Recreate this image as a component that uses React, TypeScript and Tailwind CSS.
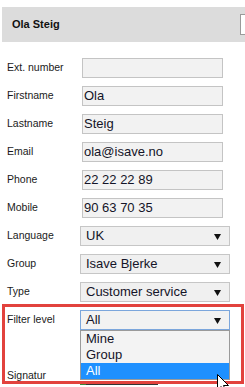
import React from "react"

const fields = [
  { label: "Ext. number", value: "" },
  { label: "Firstname", value: "Ola" },
  { label: "Lastname", value: "Steig" },
  { label: "Email", value: "ola@isave.no" },
  { label: "Phone", value: "22 22 22 89" },
  { label: "Mobile", value: "90 63 70 35" },
]

const selects = [
  { label: "Language", value: "UK" },
  { label: "Group", value: "Isave Bjerke" },
  { label: "Type", value: "Customer service" },
]

function Arrow() {
  return (
    <svg width="7" height="6" viewBox="0 0 7 6" className="absolute right-[8px] top-[7px]">
      <path d="M0 0 H7 L3.5 6 Z" fill="#111" />
    </svg>
  )
}

function SelectBox({ value, focused }: { value: string; focused?: boolean }) {
  return (
    <div
      className={
        focused
          ? "relative ml-0 h-[20px] w-[150px] border border-[#7ba6dc] bg-[#f2f2f2] pl-[5px] text-[13px] leading-[18px] text-[#141428]"
          : "relative ml-0 h-[20px] w-[150px] border border-[#c6c6c6] bg-[#f0f0f0] pl-[5px] text-[13px] leading-[18px] text-[#141428]"
      }
    >
      {value}
      <Arrow />
    </div>
  )
}

export default function App() {
  return (
    <div className="relative h-[387px] w-[245px] overflow-hidden bg-white font-['Liberation_Sans',Arial,sans-serif] text-[#1a1a1a]">
      {/* header */}
      <div className="ml-[2px] mt-[7px] flex h-[35px] items-center justify-between bg-[#dcdcdc] pl-[10px]">
        <span className="text-[11px] font-bold text-[#111]">Ola Steig</span>
        <div className="h-[21px] w-[5px] border border-r-0 border-[#9a9a9a] bg-white"></div>
      </div>

      {/* form */}
      <div className="mt-[16px] flex flex-col gap-[8px] pl-[7px]">
        {fields.map((f) => (
          <div key={f.label} className="flex h-[20px] items-center">
            <span className="w-[73px] text-[10.5px]">{f.label}</span>
            <div className="ml-[2px] h-[20px] w-[141px] border border-[#c4c4c4] bg-[#f2f2f2] pl-px text-[13px] leading-[18px] text-[#141428]">
              {f.value}
            </div>
          </div>
        ))}
        {selects.map((s) => (
          <div key={s.label} className="flex h-[20px] items-center">
            <span className="w-[73px] text-[10.5px]">{s.label}</span>
            <SelectBox value={s.value} />
          </div>
        ))}
        <div className="flex h-[20px] items-center">
          <span className="w-[73px] text-[10.5px]">Filter level</span>
          <SelectBox value="All" focused />
        </div>
        <div className="mt-[28px] flex h-[20px] items-start">
          <span className="w-[73px] pt-[2px] text-[10.5px]">Signatur</span>
          <div className="mt-[15px] flex h-[4px] w-[78px]">
            <div className="w-[6px] bg-[#3a8a3a]"></div>
            <div className="flex-1 bg-[#333]"></div>
          </div>
        </div>
      </div>

      {/* open dropdown list */}
      <div className="absolute left-[80px] top-[330px] flex w-[150px] flex-col border border-[#9a9a9a] bg-[#f3f3f3] text-[13px] text-[#141428]">
        <div className="h-[16px] pl-[5px] leading-[16px]">Mine</div>
        <div className="h-[16px] pl-[5px] leading-[16px]">Group</div>
        <div className="h-[16px] bg-[#1e90ff] pl-[5px] leading-[16px] text-white">All</div>
      </div>

      {/* red annotation */}
      <div className="pointer-events-none absolute left-[2px] top-[304px] h-[80px] w-[242px] border-[3px] border-[#e2423d]"></div>

      {/* mouse cursor */}
      <svg width="13" height="20" viewBox="0 0 13 20" className="absolute left-[217px] top-[374px]">
        <path d="M0.5 0.5 V16 L4 12.5 L6.5 18.5 L9 17.5 L6.5 11.5 H11.5 Z" fill="white" stroke="black" strokeWidth="1" />
      </svg>
    </div>
  )
}
